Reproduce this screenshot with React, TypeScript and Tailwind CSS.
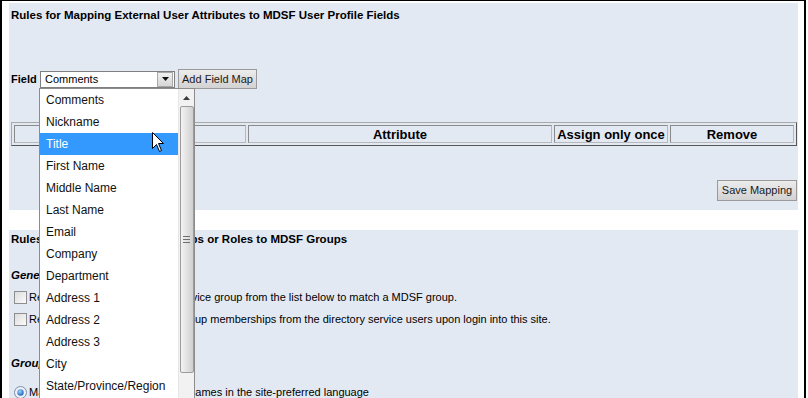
import React from "react";

const fieldOptions = [
  "Comments",
  "Nickname",
  "Title",
  "First Name",
  "Middle Name",
  "Last Name",
  "Email",
  "Company",
  "Department",
  "Address 1",
  "Address 2",
  "Address 3",
  "City",
  "State/Province/Region",
  "Postal Code",
];

function Checkbox() {
  return (
    <span className="inline-block w-[13px] h-[13px] shrink-0 border border-[#8f8f8f] bg-gradient-to-br from-[#dcdcdc] to-[#fbfbfb]" />
  );
}

function Radio() {
  return (
    <svg width="13" height="13" viewBox="0 0 13 13" className="shrink-0">
      <defs>
        <radialGradient id="rb" cx="40%" cy="35%" r="70%">
          <stop offset="0%" stopColor="#9fd0ff" />
          <stop offset="100%" stopColor="#1a5fb4" />
        </radialGradient>
      </defs>
      <circle cx="6.5" cy="6.5" r="6" fill="#eef1f5" stroke="#7a8ea8" />
      <circle cx="6.5" cy="6.5" r="3.2" fill="url(#rb)" />
    </svg>
  );
}

function Cursor() {
  return (
    <svg width="13" height="21" viewBox="0 0 13 21" className="absolute left-[152px] top-[132px]">
      <path
        d="M0.5 0.5 L0.5 16.5 L4.5 12.5 L7.5 19.5 L9.5 18.5 L6.5 11.5 L11.5 11.5 Z"
        fill="#ffffff"
        stroke="#000000"
        strokeWidth="1"
        strokeLinejoin="miter"
      />
    </svg>
  );
}

function FieldDropdown() {
  return (
    <div className="absolute left-[39px] top-[88px] w-[156px] h-[320px] border border-[#8c8c8c] bg-white flex">
      <ul className="w-[138px]">
        {fieldOptions.map((o) => (
          <li
            key={o}
            className={
              "h-[22px] leading-[22px] pl-[6px] text-[12px] whitespace-nowrap " +
              (o === "Title" ? "bg-[#3399ff] text-white" : "text-[#111111]")
            }
          >
            {o}
          </li>
        ))}
      </ul>
      <div className="w-[16px] bg-[#f2f2f2] border-l border-[#e6e6e6] flex flex-col items-center">
        <div className="h-[17px] w-full flex items-center justify-center">
          <svg width="7" height="4" viewBox="0 0 7 4">
            <path d="M0 4 L3.5 0 L7 4 Z" fill="#3a3a3a" />
          </svg>
        </div>
        <div className="w-[14px] h-[267px] rounded-[2px] border border-[#9c9c9c] bg-gradient-to-r from-[#f3f3f3] via-[#e2e2e2] to-[#cfcfcf] flex items-center justify-center">
          <div className="flex flex-col gap-[2px]">
            <span className="block w-[7px] h-px bg-[#6e6e6e]" />
            <span className="block w-[7px] h-px bg-[#6e6e6e]" />
            <span className="block w-[7px] h-px bg-[#6e6e6e]" />
          </div>
        </div>
      </div>
    </div>
  );
}

function HeaderCell({ w, label }: { w: string; label: string }) {
  return (
    <div
      className={
        w +
        " h-[18px] border border-t-[#8a8a8a] border-l-[#8a8a8a] border-b-[#b8b8b8] border-r-[#b8b8b8] flex items-center justify-center text-[13px] font-bold leading-none whitespace-nowrap"
      }
    >
      {label}
    </div>
  );
}

function GrayButton({ label, className }: { label: string; className: string }) {
  return (
    <button
      className={
        className +
        " border border-[#9a9a9a] bg-gradient-to-b from-[#ececec] to-[#d2d2d2] text-[11px] leading-none text-[#1a1a1a] flex items-center justify-center"
      }
    >
      {label}
    </button>
  );
}

export default function App() {
  return (
    <div className="relative w-[808px] h-[398px] overflow-hidden bg-white text-black font-['Liberation_Sans',Arial,sans-serif]">
      <div className="w-[806px] h-full border-l-2 border-t border-r-2 border-black pl-[7px] pr-[6px] pt-[2px]">
        {/* Field mapping */}
        <div className="bg-[#e3e9f3] h-[207px] pl-[2px] pr-[1px] pt-[5px]">
          <div className="text-[11.5px] font-bold leading-[14px]">
            Rules for Mapping External User Attributes to MDSF User Profile Fields
          </div>

          <div className="mt-[47px] h-[20px] flex items-center">
            <span className="text-[11px] font-bold w-[29px]">Field</span>
            <div className="w-[135px] h-[17px] border border-[#7f7f7f] bg-white flex items-center">
              <span className="flex-1 pl-[4px] text-[11px] leading-none">Comments</span>
              <span className="w-[16px] h-[15px] mr-px bg-gradient-to-b from-[#f0f0f0] to-[#d6d6d6] border border-[#a8a8a8] flex items-center justify-center">
                <svg width="7" height="4" viewBox="0 0 7 4">
                  <path d="M0 0 L7 0 L3.5 4 Z" fill="#111" />
                </svg>
              </span>
            </div>
            <GrayButton label="Add Field Map" className="ml-[3px] w-[79px] h-[20px]" />
          </div>

          <div className="mt-[33px] w-[786px] border border-t-[#a8a8a8] border-l-[#a8a8a8] border-b-[#555555] border-r-[#555555] p-[2px] flex gap-[2px]">
            <HeaderCell w="w-[232px]" label="" />
            <HeaderCell w="w-[304px]" label="Attribute" />
            <HeaderCell w="w-[114px]" label="Assign only once" />
            <HeaderCell w="w-[124px]" label="Remove" />
          </div>

          <div className="mt-[34px] w-[786px] flex justify-end">
            <GrayButton label="Save Mapping" className="w-[80px] h-[21px]" />
          </div>
        </div>

        {/* Group mapping */}
        <div className="mt-[20px] bg-[#e3e9f3] h-[200px] pl-[2px] pt-[2px]">
          <div className="text-[11.5px] font-bold leading-[14px]">
            Rules for Mapping External Groups or Roles to MDSF Groups
          </div>

          <div className="mt-[22px] text-[11.5px] font-bold italic leading-[14px]">General</div>

          <div className="mt-[4px] pl-[3px] h-[22px] flex items-center gap-[2px] text-[11px] whitespace-nowrap">
            <Checkbox />
            <span>Require the external directory service group from the list below to match a MDSF group.</span>
          </div>
          <div className="pl-[3px] h-[22px] flex items-center gap-[2px] text-[11px] whitespace-nowrap">
            <Checkbox />
            <span>Replace user's existing MDSF group memberships from the directory service users upon login into this site.</span>
          </div>

          <div className="mt-[26px] text-[11.5px] font-bold italic leading-[14px]">Group Names</div>

          <div className="mt-[11px] pl-[3px] h-[22px] flex items-center gap-[2px] text-[11px] whitespace-nowrap">
            <Radio />
            <span>Map each group to MDSF group names in the site-preferred language</span>
          </div>
        </div>
      </div>

      <FieldDropdown />
      <Cursor />
    </div>
  );
}
